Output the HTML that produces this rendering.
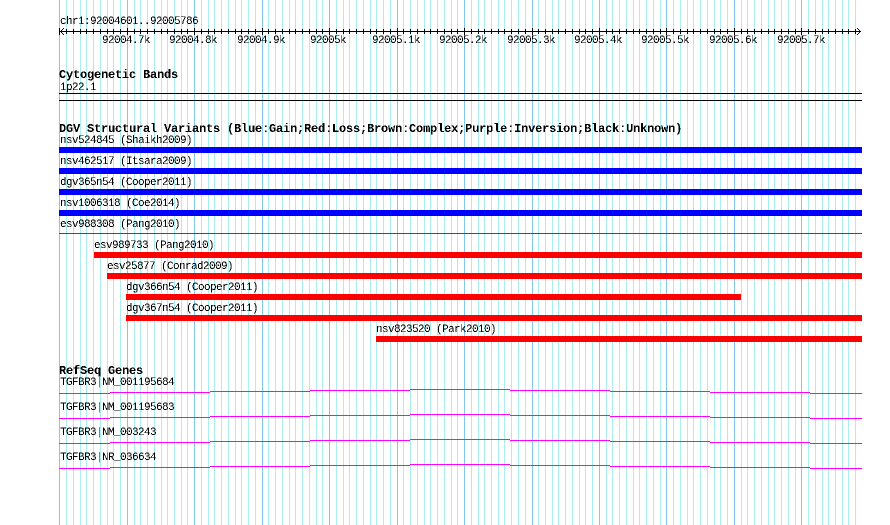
<!DOCTYPE html>
<html><head><meta charset="utf-8">
<style>
html,body{margin:0;padding:0;background:#fff;width:890px;height:525px;overflow:hidden}
svg{display:block}
.t{font-family:"Liberation Mono","DejaVu Sans Mono",monospace;font-size:11px;letter-spacing:-0.6px;fill:#000;white-space:pre}
.b{font-family:"Liberation Mono","DejaVu Sans Mono",monospace;font-size:12px;letter-spacing:-0.2px;font-weight:bold;fill:#000;white-space:pre}
</style></head>
<body>
<svg width="890" height="525" viewBox="0 0 890 525" xmlns="http://www.w3.org/2000/svg">
<defs>
<filter id="alias" x="0" y="0" width="100%" height="100%" color-interpolation-filters="sRGB">
<feComponentTransfer><feFuncA type="discrete" tableValues="0 1"/></feComponentTransfer>
</filter>
<clipPath id="c1"><rect x="0" y="29" width="890" height="5"/></clipPath>
<clipPath id="c2"><rect x="0" y="28" width="890" height="7"/></clipPath>
<path id="minor" d="M66.5 0V525M73.5 0V525M80.5 0V525M86.5 0V525M93.5 0V525M100.5 0V525M107.5 0V525M113.5 0V525M120.5 0V525M134.5 0V525M140.5 0V525M147.5 0V525M154.5 0V525M161.5 0V525M167.5 0V525M174.5 0V525M181.5 0V525M187.5 0V525M201.5 0V525M208.5 0V525M214.5 0V525M221.5 0V525M228.5 0V525M235.5 0V525M241.5 0V525M248.5 0V525M255.5 0V525M268.5 0V525M275.5 0V525M282.5 0V525M289.5 0V525M295.5 0V525M302.5 0V525M309.5 0V525M316.5 0V525M322.5 0V525M336.5 0V525M343.5 0V525M349.5 0V525M356.5 0V525M363.5 0V525M370.5 0V525M376.5 0V525M383.5 0V525M390.5 0V525M403.5 0V525M410.5 0V525M417.5 0V525M424.5 0V525M430.5 0V525M437.5 0V525M444.5 0V525M451.5 0V525M457.5 0V525M471.5 0V525M478.5 0V525M484.5 0V525M491.5 0V525M498.5 0V525M504.5 0V525M511.5 0V525M518.5 0V525M525.5 0V525M538.5 0V525M545.5 0V525M552.5 0V525M558.5 0V525M565.5 0V525M572.5 0V525M579.5 0V525M585.5 0V525M592.5 0V525M606.5 0V525M612.5 0V525M619.5 0V525M626.5 0V525M633.5 0V525M639.5 0V525M646.5 0V525M653.5 0V525M660.5 0V525M673.5 0V525M680.5 0V525M687.5 0V525M693.5 0V525M700.5 0V525M707.5 0V525M714.5 0V525M720.5 0V525M727.5 0V525M741.5 0V525M747.5 0V525M754.5 0V525M761.5 0V525M768.5 0V525M774.5 0V525M781.5 0V525M788.5 0V525M795.5 0V525M808.5 0V525M815.5 0V525M822.5 0V525M828.5 0V525M835.5 0V525M842.5 0V525M848.5 0V525M855.5 0V525"/>
<path id="major" d="M59.5 0V525M127.5 0V525M194.5 0V525M262.5 0V525M329.5 0V525M397.5 0V525M464.5 0V525M532.5 0V525M599.5 0V525M666.5 0V525M734.5 0V525M801.5 0V525"/>
</defs>
<rect width="890" height="525" fill="#fff"/>
<g shape-rendering="crispEdges" fill="none" stroke-width="1">
<use href="#minor" stroke="#aaeeee"/>
<use href="#major" stroke="#80c8f0"/>
<g clip-path="url(#c1)"><use href="#minor" stroke="#000"/></g>
<g clip-path="url(#c2)"><use href="#major" stroke="#000"/></g>
<path d="M60 31.5H861M61 30.5h1M62 29.5h1M63 28.5h1M61 32.5h1M62 33.5h1M63 34.5h1M860 30.5h-1M859 29.5h-1M858 28.5h-1M860 32.5h-1M859 33.5h-1M858 34.5h-1" stroke="#000"/>
<path d="M59 93.5H862M59 100.5H862" stroke="#000"/>
<path d="M59 233.5H862" stroke="#f00"/>
<path d="M59 393.5H110M110 392.5H210M210 391.5H310M310 390.5H410M410 389.5H510M510 390.5H610M610 391.5H710M710 392.5H810M810 393.5H862" stroke="#f0f"/>
<path d="M59 418.5H110M110 417.5H210M210 416.5H310M310 415.5H410M410 414.5H510M510 415.5H610M610 416.5H710M710 417.5H810M810 418.5H862" stroke="#f0f"/>
<path d="M59 443.5H110M110 442.5H210M210 441.5H310M310 440.5H410M410 439.5H510M510 440.5H610M610 441.5H710M710 442.5H810M810 443.5H862" stroke="#f0f"/>
<path d="M59 468.5H110M110 467.5H210M210 466.5H310M310 465.5H410M410 464.5H510M510 465.5H610M610 466.5H710M710 467.5H810M810 468.5H862" stroke="#f0f"/>
</g>
<g shape-rendering="crispEdges">
<rect x="59" y="147" width="803" height="6" fill="#00f"/>
<rect x="59" y="168" width="803" height="6" fill="#00f"/>
<rect x="59" y="189" width="803" height="6" fill="#00f"/>
<rect x="59" y="210" width="803" height="6" fill="#00f"/>
<rect x="94" y="252" width="768" height="6" fill="#f00"/>
<rect x="107" y="273" width="755" height="6" fill="#f00"/>
<rect x="126" y="294" width="615" height="6" fill="#f00"/>
<rect x="126" y="315" width="736" height="6" fill="#f00"/>
<rect x="376" y="336" width="486" height="6" fill="#f00"/>
</g>
<g filter="url(#alias)">
<text class="t" x="60" y="24">chr1:92004601..92005786</text>
<text class="t" x="102" y="43">92004.7k</text>
<text class="t" x="169" y="43">92004.8k</text>
<text class="t" x="237" y="43">92004.9k</text>
<text class="t" x="310" y="43">92005k</text>
<text class="t" x="372" y="43">92005.1k</text>
<text class="t" x="439" y="43">92005.2k</text>
<text class="t" x="507" y="43">92005.3k</text>
<text class="t" x="574" y="43">92005.4k</text>
<text class="t" x="641" y="43">92005.5k</text>
<text class="t" x="709" y="43">92005.6k</text>
<text class="t" x="777" y="43">92005.7k</text>
<text class="b" x="59" y="78">Cytogenetic Bands</text>
<text class="t" x="60" y="90">1p22.1</text>
<text class="b" x="59" y="132">DGV Structural Variants (Blue:Gain;Red:Loss;Brown:Complex;Purple:Inversion;Black:Unknown)</text>
<text class="t" x="60" y="143">nsv524845 (Shaikh2009)</text>
<text class="t" x="60" y="164">nsv462517 (Itsara2009)</text>
<text class="t" x="60" y="185">dgv365n54 (Cooper2011)</text>
<text class="t" x="60" y="206">nsv1006318 (Coe2014)</text>
<text class="t" x="60" y="227">esv988308 (Pang2010)</text>
<text class="t" x="94" y="248">esv989733 (Pang2010)</text>
<text class="t" x="107" y="269">esv25877 (Conrad2009)</text>
<text class="t" x="126" y="290">dgv366n54 (Cooper2011)</text>
<text class="t" x="126" y="311">dgv367n54 (Cooper2011)</text>
<text class="t" x="376" y="332">nsv823520 (Park2010)</text>
<text class="b" x="59" y="374">RefSeq Genes</text>
<text class="t" x="60" y="385">TGFBR3|NM_001195684</text>
<text class="t" x="60" y="410">TGFBR3|NM_001195683</text>
<text class="t" x="60" y="435">TGFBR3|NM_003243</text>
<text class="t" x="60" y="460">TGFBR3|NR_036634</text>
</g>
</svg>
</body></html>
